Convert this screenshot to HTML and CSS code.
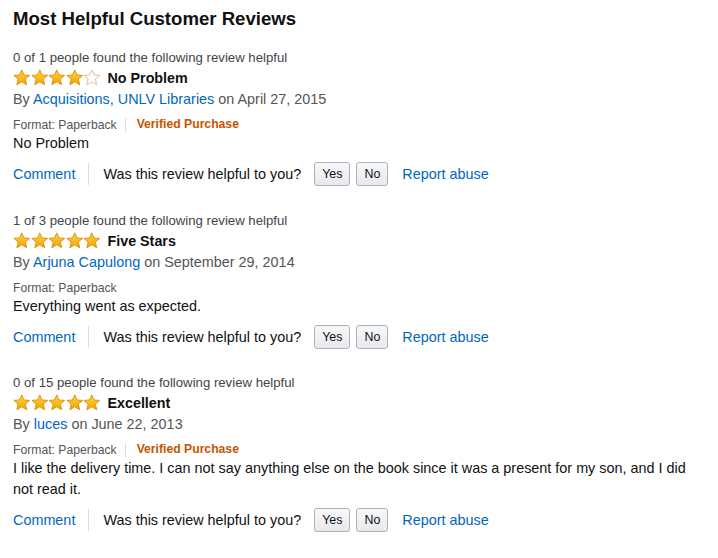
FILE: index.html
```html
<!DOCTYPE html>
<html>
<head>
<meta charset="utf-8">
<link rel="stylesheet" href="styles.css">
</head>
<body>
<svg width="0" height="0" class="defs">
  <defs>
    <linearGradient id="gold" x1="0" y1="0" x2="0" y2="1">
      <stop offset="0" stop-color="#ffd24a"/>
      <stop offset="1" stop-color="#f3a500"/>
    </linearGradient>
    <symbol id="star" viewBox="0 0 20 19">
      <polygon points="10,0.8 12.6,6.6 19,7.1 14.1,11.3 15.6,17.8 10,14.4 4.4,17.8 5.9,11.3 1,7.1 7.4,6.6" fill="url(#gold)" stroke="#d98c00" stroke-width="1" stroke-linejoin="round"/>
    </symbol>
    <symbol id="star-empty" viewBox="0 0 20 19">
      <polygon points="10,0.8 12.6,6.6 19,7.1 14.1,11.3 15.6,17.8 10,14.4 4.4,17.8 5.9,11.3 1,7.1 7.4,6.6" fill="#fff" stroke="#d8b983" stroke-width="1" stroke-linejoin="round"/>
    </symbol>
  </defs>
</svg>
<div class="page">
  <h2 class="title">Most Helpful Customer Reviews</h2>

  <div class="review">
    <div class="helpful">0 of 1 people found the following review helpful</div>
    <div class="rating-row">
      <span class="stars">
        <svg class="star"><use href="#star"/></svg><svg class="star"><use href="#star"/></svg><svg class="star"><use href="#star"/></svg><svg class="star"><use href="#star"/></svg><svg class="star"><use href="#star-empty"/></svg>
      </span>
      <span class="review-title">No Problem</span>
    </div>
    <div class="byline">By <a href="#">Acquisitions, UNLV Libraries</a> on April 27, 2015</div>
    <div class="format"><span class="fmt">Format: Paperback</span><span class="vp">Verified Purchase</span></div>
    <div class="text">No Problem</div>
    <div class="actions">
      <a href="#" class="comment">Comment</a>
      <span class="question">Was this review helpful to you?</span>
      <button class="btn yes">Yes</button><button class="btn no">No</button>
      <a href="#" class="report">Report abuse</a>
    </div>
  </div>

  <div class="review">
    <div class="helpful">1 of 3 people found the following review helpful</div>
    <div class="rating-row">
      <span class="stars">
        <svg class="star"><use href="#star"/></svg><svg class="star"><use href="#star"/></svg><svg class="star"><use href="#star"/></svg><svg class="star"><use href="#star"/></svg><svg class="star"><use href="#star"/></svg>
      </span>
      <span class="review-title">Five Stars</span>
    </div>
    <div class="byline">By <a href="#">Arjuna Capulong</a> on September 29, 2014</div>
    <div class="format"><span class="fmt only">Format: Paperback</span></div>
    <div class="text">Everything went as expected.</div>
    <div class="actions">
      <a href="#" class="comment">Comment</a>
      <span class="question">Was this review helpful to you?</span>
      <button class="btn yes">Yes</button><button class="btn no">No</button>
      <a href="#" class="report">Report abuse</a>
    </div>
  </div>

  <div class="review">
    <div class="helpful">0 of 15 people found the following review helpful</div>
    <div class="rating-row">
      <span class="stars">
        <svg class="star"><use href="#star"/></svg><svg class="star"><use href="#star"/></svg><svg class="star"><use href="#star"/></svg><svg class="star"><use href="#star"/></svg><svg class="star"><use href="#star"/></svg>
      </span>
      <span class="review-title">Excellent</span>
    </div>
    <div class="byline">By <a href="#">luces</a> on June 22, 2013</div>
    <div class="format"><span class="fmt">Format: Paperback</span><span class="vp">Verified Purchase</span></div>
    <div class="text">I like the delivery time. I can not say anything else on the book since it was a present for my son, and I did not read it.</div>
    <div class="actions">
      <a href="#" class="comment">Comment</a>
      <span class="question">Was this review helpful to you?</span>
      <button class="btn yes">Yes</button><button class="btn no">No</button>
      <a href="#" class="report">Report abuse</a>
    </div>
  </div>
</div>
</body>
</html>
```

FILE: styles.css
```css
html, body {
  margin: 0;
  padding: 0;
  background: #fff;
}
body {
  font-family: "Liberation Sans", Arial, sans-serif;
  color: #111;
}
.defs {
  position: absolute;
  width: 0;
  height: 0;
}
.page {
  padding: 8px 13px 0 13px;
  width: 680px;
}
.title {
  margin: 0;
  font-size: 18.6px;
  font-weight: bold;
  line-height: 22px;
  color: #111;
}
.review {
  margin-top: 19px;
}
.review + .review {
  margin-top: 26px;
}
.review:last-child {
  margin-top: 25px;
}
.helpful {
  font-size: 13.2px;
  line-height: 17px;
  color: #444;
}
.rating-row {
  display: flex;
  align-items: center;
  height: 21px;
  margin-top: 1px;
}
.stars {
  display: flex;
  margin-right: 7px;
}
.star {
  width: 17.5px;
  height: 17px;
  display: block;
}
.review-title {
  font-size: 14.3px;
  font-weight: bold;
  color: #111;
}
.byline {
  margin-top: 1px;
  font-size: 14.4px;
  line-height: 21px;
  color: #555;
}
a {
  color: #0066c0;
  text-decoration: none;
}
.format {
  margin-top: 7px;
  font-size: 12.2px;
  line-height: 15px;
  height: 15px;
  display: flex;
  align-items: center;
}
.fmt {
  color: #555;
  padding-right: 8px;
  border-right: 1px solid #ddd;
  margin-right: 11px;
  line-height: 14px;
}
.fmt.only {
  border-right: none;
}
.vp {
  color: #c45500;
  font-weight: bold;
}
.text {
  margin-top: 1px;
  font-size: 14.4px;
  line-height: 21px;
  color: #111;
}
.actions {
  margin-top: 8px;
  display: flex;
  align-items: center;
  font-size: 14.4px;
  height: 24px;
}
.comment {
  padding-right: 13px;
  border-right: 1px solid #ddd;
  margin-right: 14px;
  line-height: 22px;
}
.question {
  color: #111;
  margin-right: 13px;
}
.btn {
  font-family: "Liberation Sans", Arial, sans-serif;
  font-size: 12.4px;
  color: #111;
  height: 24px;
  padding: 0 7px;
  border: 1px solid #adb1b8;
  border-radius: 3px;
  background: linear-gradient(#f7f8fa, #e7e9ec);
  margin-right: 6px;
}
.btn.no {
  margin-right: 14px;
}
```
